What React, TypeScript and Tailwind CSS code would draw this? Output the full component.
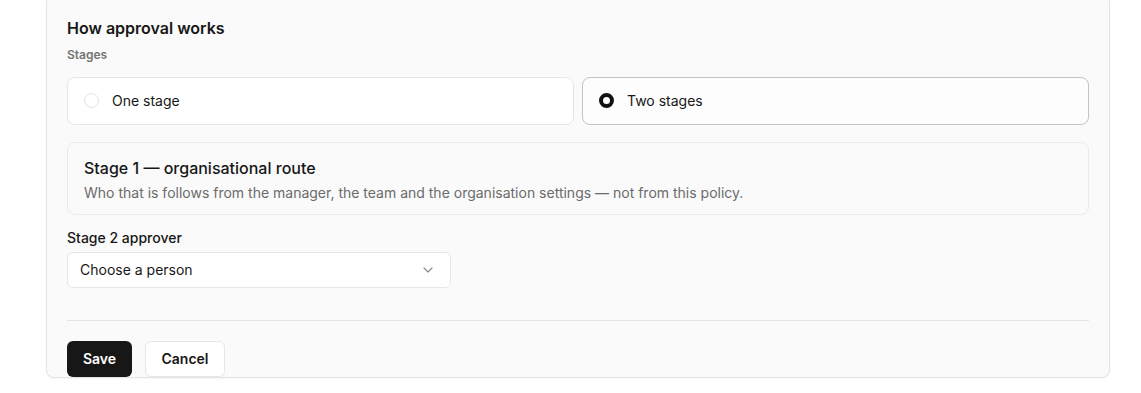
import { ChevronDown } from 'lucide-react';

function RadioCard({ label, checked }: { label: string; checked?: boolean }) {
  return (
    <div
      className={
        checked
          ? 'flex h-12 items-center gap-[13px] rounded-lg border border-[#c4c4c4] bg-[#fdfdfd] pl-4'
          : 'flex h-12 items-center gap-[13px] rounded-lg border border-[#e6e6e6] bg-white pl-4'
      }
    >
      {checked ? (
        <span className="box-border h-[15px] w-[15px] -translate-y-[1px] rounded-full border-[4px] border-[#111111] bg-white" />
      ) : (
        <span className="box-border h-[15px] w-[15px] -translate-y-[1px] rounded-full border border-[#e3e3e3] bg-white" />
      )}
      <span className="text-sm text-[#171717]">{label}</span>
    </div>
  );
}

export default function App() {
  return (
    <div className="h-[393px] w-full bg-white" style={{ fontFamily: 'Inter, "Noto Sans", sans-serif' }}>
      <div className="ml-[46px] w-[1064px] rounded-b-lg border-x border-b border-[#e4e4e4] bg-[#fafafa] px-5 pt-4 shadow-[0_1px_2px_rgba(0,0,0,0.04)]">
        <h2 className="text-base leading-6 font-semibold text-[#171717]">How approval works</h2>
        <div className="mt-[7px] text-xs leading-4 font-semibold text-[#737373]">Stages</div>

        <div className="mt-[14px] grid grid-cols-2 gap-2">
          <RadioCard label="One stage" />
          <RadioCard label="Two stages" checked />
        </div>

        <div className="mt-[17px] rounded-lg border border-[#ebebeb] bg-[#fafafa] px-4 pt-[14px] pb-[11px]">
          <div className="text-base leading-[22px] font-medium text-[#171717]">Stage 1 — organisational route</div>
          <div className="mt-1 text-sm leading-5 text-[#6b6b6b]">
            Who that is follows from the manager, the team and the organisation settings — not from this policy.
          </div>
        </div>

        <div className="mt-[13px] text-sm leading-5 font-medium text-[#171717]">Stage 2 approver</div>
        <div className="mt-1 flex h-9 w-[384px] items-center justify-between rounded-md border border-[#e6e6e6] bg-white pr-[14px] pl-3">
          <span className="text-sm text-[#171717]">Choose a person</span>
          <ChevronDown className="h-4 w-4 text-[#8a8a8a]" strokeWidth={1.75} />
        </div>

        <div className="mt-8 border-t border-[#e5e5e5]" />

        <div className="mt-5 flex gap-[13px]">
          <button className="h-9 w-[65px] rounded-md bg-[#171717] text-sm font-semibold text-white">Save</button>
          <button className="h-9 w-20 rounded-md border border-[#e6e6e6] bg-white text-sm font-semibold text-[#171717]">
            Cancel
          </button>
        </div>
      </div>
    </div>
  );
}
